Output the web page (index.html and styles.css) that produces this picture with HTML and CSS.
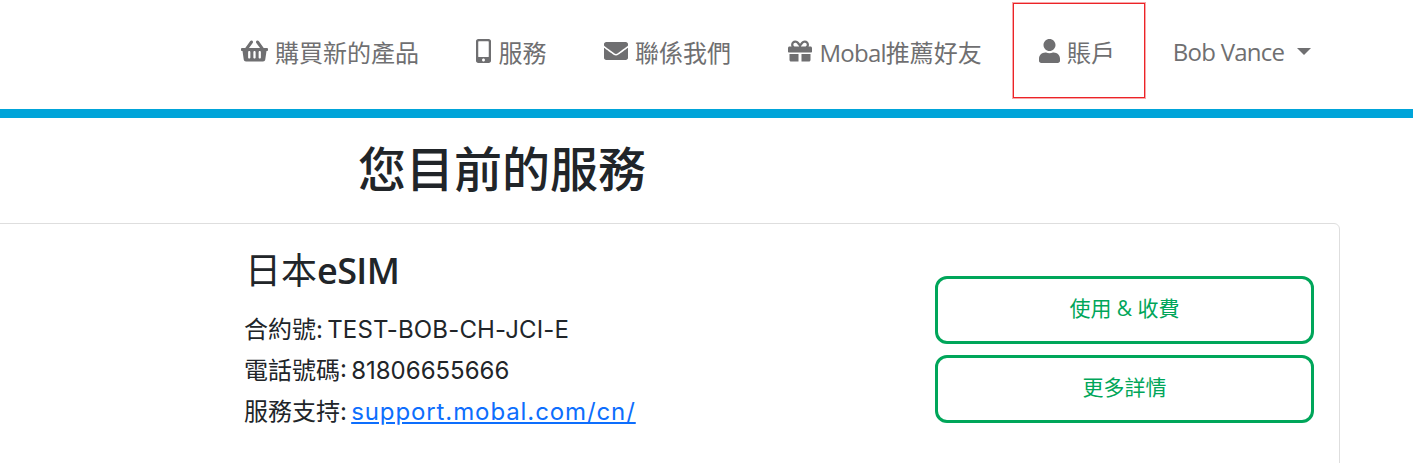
FILE: index.html
```html
<!DOCTYPE html>
<html lang="zh-Hant">
<head>
  <meta charset="UTF-8">
  <title>您目前的服務</title>
  <link rel="stylesheet" href="styles.css">
</head>
<body>
  <nav class="topnav">
    <a class="navitem" href="#">
      <svg class="icon" viewBox="0 0 576 512"><path d="M576 216v16c0 13.255-10.745 24-24 24h-8l-26.113 182.788C514.509 462.435 494.257 480 470.37 480H105.63c-23.887 0-44.139-17.565-47.518-41.212L32 256h-8c-13.255 0-24-10.745-24-24v-16c0-13.255 10.745-24 24-24h67.341l106.78-146.821c10.395-14.292 30.407-17.453 44.701-7.058 14.293 10.395 17.453 30.408 7.058 44.701L170.477 192h235.046L326.12 82.821c-10.395-14.292-7.234-34.306 7.059-44.701 14.291-10.395 34.306-7.235 44.701 7.058L484.659 192H552c13.255 0 24 10.745 24 24zM312 392V280c0-13.255-10.745-24-24-24s-24 10.745-24 24v112c0 13.255 10.745 24 24 24s24-10.745 24-24zm112 0V280c0-13.255-10.745-24-24-24s-24 10.745-24 24v112c0 13.255 10.745 24 24 24s24-10.745 24-24zm-224 0V280c0-13.255-10.745-24-24-24s-24 10.745-24 24v112c0 13.255 10.745 24 24 24s24-10.745 24-24z"/></svg>
      購買新的產品
    </a>
    <a class="navitem" href="#">
      <svg class="icon" viewBox="0 0 320 512"><path d="M272 0H48C21.5 0 0 21.5 0 48v416c0 26.5 21.5 48 48 48h224c26.5 0 48-21.5 48-48V48c0-26.5-21.5-48-48-48zM160 480c-17.7 0-32-14.3-32-32s14.3-32 32-32 32 14.3 32 32-14.3 32-32 32zm112-108c0 6.6-5.4 12-12 12H60c-6.6 0-12-5.4-12-12V60c0-6.6 5.4-12 12-12h200c6.6 0 12 5.4 12 12v312z"/></svg>
      服務
    </a>
    <a class="navitem" href="#">
      <svg class="icon" viewBox="0 0 512 512"><path d="M502.3 190.8c3.9-3.1 9.7-.2 9.7 4.7V400c0 26.5-21.5 48-48 48H48c-26.5 0-48-21.5-48-48V195.6c0-5 5.7-7.8 9.7-4.7 22.4 17.4 52.1 39.5 154.1 113.6 21.1 15.4 56.7 47.8 92.2 47.6 35.7.3 72-32.8 92.3-47.6 102-74.1 131.6-96.3 154-113.7zM256 320c23.2.4 56.6-29.2 73.4-41.4 132.7-96.3 142.8-104.7 173.4-128.7 5.8-4.5 9.2-11.5 9.2-18.9v-19c0-26.5-21.5-48-48-48H48C21.5 64 0 85.5 0 112v19c0 7.4 3.4 14.3 9.2 18.9 30.6 23.9 40.7 32.4 173.4 128.7 16.8 12.2 50.2 41.8 73.4 41.4z"/></svg>
      聯係我們
    </a>
    <a class="navitem" href="#">
      <svg class="icon" viewBox="0 0 512 512"><path d="M32 448c0 17.7 14.3 32 32 32h160V320H32v128zm256 32h160c17.7 0 32-14.3 32-32V320H288v160zm192-320h-42.1c6.2-12.1 10.1-25.5 10.1-40 0-48.5-39.5-88-88-88-41.6 0-68.5 21.3-103 68.3-34.5-47-61.4-68.3-103-68.3-48.5 0-88 39.5-88 88 0 14.5 3.8 27.9 10.1 40H32c-17.7 0-32 14.3-32 32v80c0 8.8 7.2 16 16 16h480c8.8 0 16-7.2 16-16v-80c0-17.7-14.3-32-32-32zm-326.1 0c-22.1 0-40-17.9-40-40s17.9-40 40-40c19.9 0 34.6 3.3 86.1 80h-86.1zm206.1 0h-86.1c51.4-76.5 65.7-80 86.1-80 22.1 0 40 17.9 40 40s-17.9 40-40 40z"/></svg>
      <span><span class="tight">Mobal</span>推薦好友</span>
    </a>
    <a class="navitem navitem-marked" href="#">
      <svg class="icon" viewBox="0 0 448 512"><path d="M224 256c70.7 0 128-57.3 128-128S294.7 0 224 0 96 57.3 96 128s57.3 128 128 128zm89.6 32h-16.7c-22.2 10.2-46.9 16-72.9 16s-50.6-5.8-72.9-16h-16.7C60.2 288 0 348.2 0 422.4V464c0 26.5 21.5 48 48 48h352c26.5 0 48-21.5 48-48v-41.6c0-74.2-60.2-134.4-134.4-134.4z"/></svg>
      賬戶
    </a>
    <a class="navitem" href="#">
      <span class="tight">Bob Vance</span>
      <span class="caret"></span>
    </a>
  </nav>

  <main class="content">
    <h1 class="pagetitle">您目前的服務</h1>
    <section class="servicecard">
      <div class="serviceinfo">
        <h2 class="servicename">日本<span class="latin">eSIM</span></h2>
        <p class="serviceline">合約號: <span class="contract">TEST-BOB-CH-JCI-E</span></p>
        <p class="serviceline">電話號碼: 81806655666</p>
        <p class="serviceline">服務支持: <a href="#">support.mobal.com/cn/</a></p>
      </div>
      <div class="serviceactions">
        <a class="btn-outline" href="#">使用 &amp; 收費</a>
        <a class="btn-outline" href="#">更多詳情</a>
      </div>
    </section>
  </main>
</body>
</html>
```

FILE: styles.css
```css
body {
  margin: 0;
  background: #fff;
  font-family: "Open Sans", "Noto Sans CJK TC", sans-serif;
  color: #212529;
}

/* top bar */
.topnav {
  display: flex;
  justify-content: flex-end;
  align-items: stretch;
  height: 95px;
  padding: 3px 73px 11px 0;
  border-bottom: 9px solid #00a4d9;
}
.navitem {
  display: flex;
  align-items: center;
  gap: 7px;
  padding: 1px 28.75px 0;
  font-size: 24px;
  color: #6f6f71;
  text-decoration: none;
  white-space: nowrap;
}
.navitem-marked {
  margin: 0 -1px 0 2.5px;
  padding: 1px 29px 0 25px;
  border: 1px solid #ec2327;
  box-shadow: 0 0 0 1px rgba(236, 35, 39, .4);
}
.tight {
  letter-spacing: -.75px;
}
.icon {
  height: 24px;
  fill: #6f6f71;
}
.caret {
  margin-left: 6px;
  margin-bottom: 0;
  border-top: 7px solid #6f6f71;
  border-left: 7px solid transparent;
  border-right: 7px solid transparent;
}

/* services */
.content {
  height: 345px;
  overflow: hidden;
}
.pagetitle {
  margin: 0;
  padding: 23px 0 0 358px;
  font-size: 48px;
  font-weight: 500;
  line-height: 56px;
}
.servicecard {
  display: flex;
  justify-content: space-between;
  height: 260px;
  margin: 26px 73px 0 -20px;
  padding: 24px 25px 0 262px;
  border: 1px solid #dedede;
  border-radius: 6px;
}
.servicename {
  margin: 0 0 15px 2px;
  font-size: 36px;
  font-weight: 400;
  line-height: 46px;
}
.latin {
  font-weight: 600;
  letter-spacing: -.6px;
}
.serviceline {
  margin: 0 0 0 1px;
  font-family: "Inter", "Noto Sans CJK TC", sans-serif;
  font-size: 24px;
  line-height: 41px;
  word-spacing: -2.5px;
}
.contract {
  letter-spacing: .15px;
}
.serviceline a {
  color: #0d6efd;
  letter-spacing: .9px;
}
.serviceactions {
  display: flex;
  flex-direction: column;
  gap: 11.5px;
  width: 379px;
  padding-top: 28px;
}
.btn-outline {
  display: flex;
  align-items: center;
  justify-content: center;
  box-sizing: border-box;
  height: 67.5px;
  padding-bottom: 6px;
  border: 3px solid #00a65a;
  border-radius: 12px;
  font-size: 21px;
  color: #00a65a;
  text-decoration: none;
}
```
